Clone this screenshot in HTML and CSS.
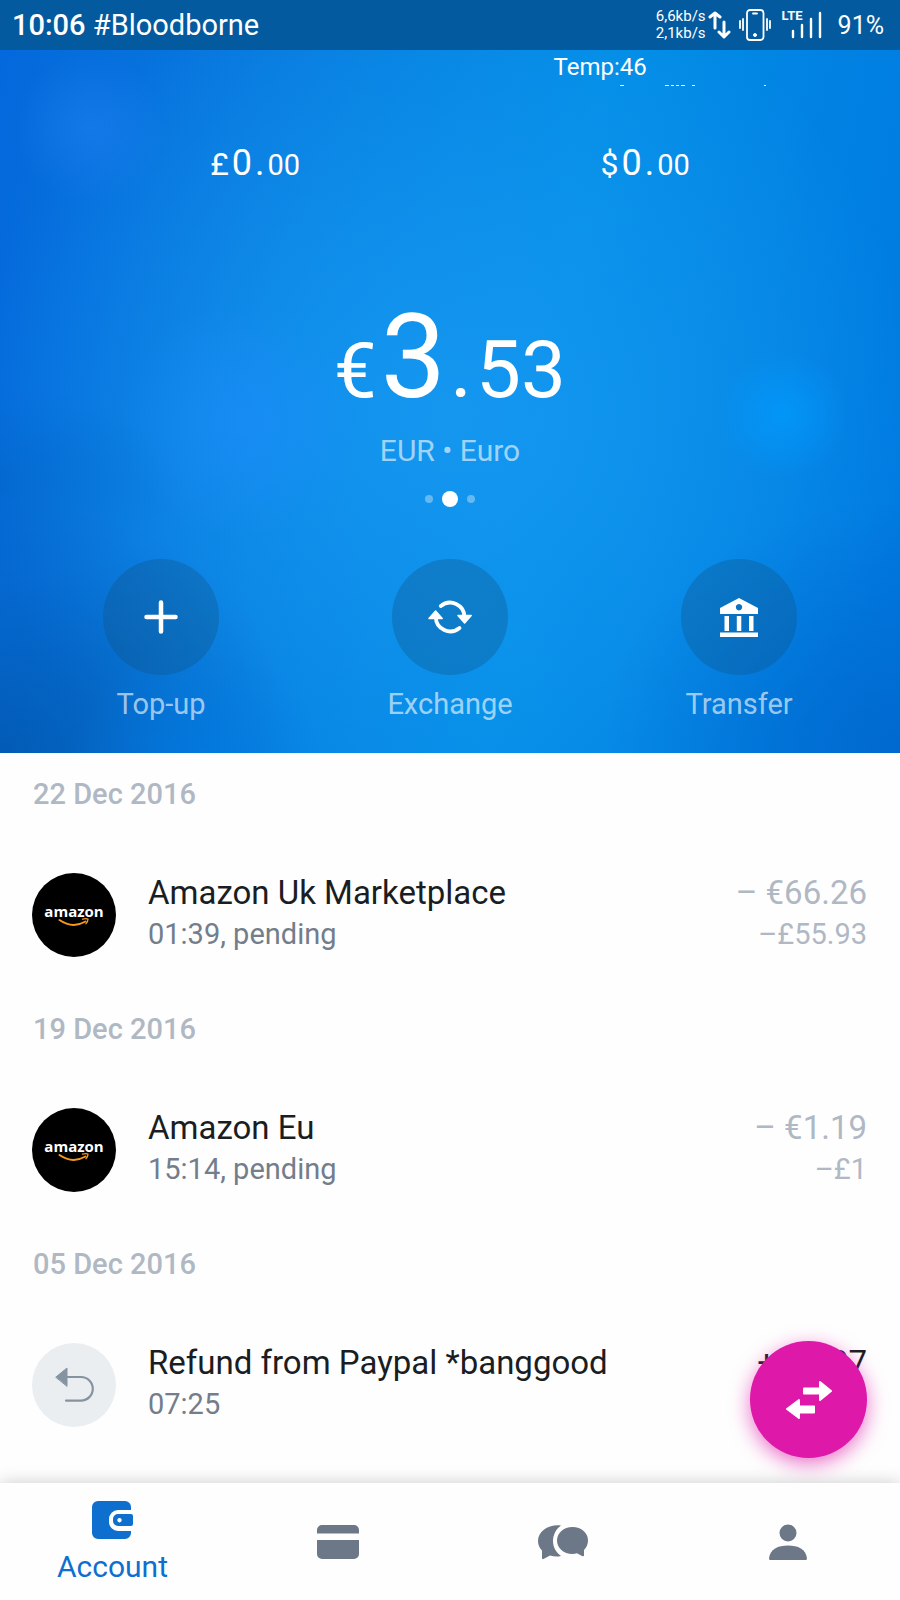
FILE: index.html
```
<!DOCTYPE html>
<html lang="en">
<head>
<meta charset="utf-8">
<meta name="viewport" content="width=device-width, initial-scale=1">
<title>Account</title>
<link rel="stylesheet" href="styles.css">
</head>
<body>
<div class="app">
  <header class="hero">
    <div class="status">
      <div class="status-left"><b class="clock">10:06</b> #Bloodborne</div>
      <div class="status-right">
        <div class="speeds"><span>6,6kb/s</span><span>2,1kb/s</span></div>
        <svg class="arrows" width="24" height="28" viewBox="0 0 24 28" fill="none" stroke="#fff" stroke-width="3" stroke-linecap="round" stroke-linejoin="round"><path d="M7 17V2M2 6l5-4 5 4M16 11v14M11 21l5 5 5-5"/></svg>
        <svg class="phone" width="32" height="32" viewBox="0 0 32 32" fill="none" stroke="#fff" stroke-width="1.8" stroke-linecap="round"><rect x="8" y="1" width="16.500" height="30" rx="3"/><path d="M14 4.500h4M1 12v7M4 10v11M28 10v11M31 12v7"/><circle cx="16" cy="26" r="1.500" fill="#fff" stroke-width="1"/></svg>
        <div class="signal">
          <span class="lte">LTE</span>
          <svg width="32" height="28" viewBox="0 0 32 28" stroke="#fff" stroke-width="2.400" stroke-linecap="round"><path d="M3 20v6M12 14v12M21 8v18M30 2v24"/></svg>
        </div>
        <span class="battery">91%</span>
      </div>
    </div>
    <div class="temp">Temp:46
      <svg class="specks" width="150" height="2" viewBox="0 0 150 2" fill="#fff"><path d="M2 0h4v1H2zM47 0h4v1h-4zM53 0h3v1h-3zM58 0h3v1h-3zM63 0h4v1h-4zM74 0h3v1h-3zM146 0h2v1h-2z"/></svg>
    </div>
    <div class="others">
      <div class="small-sum"><span class="sign">£</span><span class="whole">0</span><span class="whole">.</span><span class="cents">00</span></div>
      <div class="small-sum"><span class="sign">$</span><span class="whole">0</span><span class="whole">.</span><span class="cents">00</span></div>
    </div>
    <div class="balance"><span class="sign">€</span><span class="whole">3</span><span class="point">.</span><span class="cents">53</span></div>
    <div class="currency">EUR • Euro</div>
    <div class="dots"><i></i><i class="on"></i><i></i></div>
    <div class="actions">
      <button class="action" type="button">
        <span class="disc"><svg width="44" height="44" viewBox="0 0 44 44" stroke="#fff" stroke-width="4.500" stroke-linecap="round"><path d="M22 7.500v29M7.500 22h29"/></svg></span>
        Top-up
      </button>
      <button class="action" type="button">
        <span class="disc"><svg width="44" height="44" viewBox="0 0 44 44" fill="none" stroke="#fff" stroke-width="3.800" stroke-linecap="round" stroke-linejoin="round"><path d="M12.800 11A14.500 14.500 0 0 1 36.500 22M31.500 33A14.500 14.500 0 0 1 7.800 22"/><path fill="#fff" stroke-width="1.500" d="M30 20.500h13.200L36.600 28zM1 23.500h13.200L7.600 16z"/></svg></span>
        Exchange
      </button>
      <button class="action" type="button">
        <span class="disc"><svg width="40" height="40" viewBox="0 0 40 40" fill="#fff"><path fill-rule="evenodd" d="M20 1 39 11v6H1v-6zM20 7a3.200 3.200 0 1 0 .01 0z"/><path d="M5.500 19h4.500v15H5.500zM17.800 19h4.500v15h-4.500zM30 19h4.500v15H30zM1 35.500h38V40H1z"/></svg></span>
        Transfer
      </button>
    </div>
  </header>

  <main class="list">
    <section class="day">
      <h2>22 Dec 2016</h2>
      <article class="entry">
        <div class="avatar amazon">amazon<svg width="32" height="9" viewBox="0 0 32 9" fill="none" stroke="#f79a1c" stroke-linecap="round"><path stroke-width="2" d="M1.500 2q13 9 26 1.500"/><path stroke-width="1.300" d="M24.500 1.200q4-1 5.500 0 0 2-2 4.500"/></svg></div>
        <div class="what"><h3>Amazon Uk Marketplace</h3><p>01:39, pending</p></div>
        <div class="sum"><span>– €66.26</span><small>–£55.93</small></div>
      </article>
    </section>
    <section class="day">
      <h2>19 Dec 2016</h2>
      <article class="entry">
        <div class="avatar amazon">amazon<svg width="32" height="9" viewBox="0 0 32 9" fill="none" stroke="#f79a1c" stroke-linecap="round"><path stroke-width="2" d="M1.500 2q13 9 26 1.500"/><path stroke-width="1.300" d="M24.500 1.200q4-1 5.500 0 0 2-2 4.500"/></svg></div>
        <div class="what"><h3>Amazon Eu</h3><p>15:14, pending</p></div>
        <div class="sum"><span>– €1.19</span><small>–£1</small></div>
      </article>
    </section>
    <section class="day">
      <h2>05 Dec 2016</h2>
      <article class="entry">
        <div class="avatar refund"><svg width="40" height="36" viewBox="0 0 40 36" fill="none" stroke="#8593a0" stroke-width="2.200" stroke-linecap="round"><path d="M12 10h15a11.800 11.800 0 0 1 0 23.600H12"/><path fill="#8593a0" stroke-width="1" stroke-linejoin="round" d="M2 10 13 1v18z"/></svg></div>
        <div class="what"><h3>Refund from Paypal *banggood</h3><p>07:25</p></div>
        <div class="sum credit"><span>+ €3.37</span></div>
      </article>
    </section>
  </main>

  <footer class="dock">
    <button class="fab" type="button" aria-label="Move money"><svg width="46" height="38" viewBox="0 0 46 38" fill="#fff" stroke="#fff" stroke-linejoin="round" stroke-width="2"><path d="M18 7.500h16V1l11 9-11 9v-6.500H18zM28 31.500H13V37L1 28l12-9v6.500h15z"/></svg></button>
    <nav class="tabs">
      <a class="tab active" href="#account"><svg width="42" height="40" viewBox="0 0 42 40" fill="#0f6fcf"><path d="M6 1h27a6 6 0 0 1 6 6v3H26a9 9 0 0 0-9 9v3a9 9 0 0 0 9 9h13v2a6 6 0 0 1-6 6H6a6 6 0 0 1-6-6V7a6 6 0 0 1 6-6z"/><path fill-rule="evenodd" d="M26 14h13a2 2 0 0 1 2 2v8a2 2 0 0 1-2 2H26a5 5 0 0 1-5-5v-2a5 5 0 0 1 5-5zM27.500 18a2.200 2.200 0 1 0 .01 0z"/></svg>Account</a>
      <a class="tab" href="#cards" aria-label="Cards"><svg width="44" height="36" viewBox="0 0 44 36" fill="#6c7787"><path d="M1 9.500V6a5 5 0 0 1 5-5h32a5 5 0 0 1 5 5v3.500zM1 16h42v14a5 5 0 0 1-5 5H6a5 5 0 0 1-5-5z"/></svg></a>
      <a class="tab" href="#chat" aria-label="Chat"><svg width="52" height="36" viewBox="0 0 52 36" fill="#6c7787"><path d="M24 1.500C12 0 1 7 1 17c0 4 1.500 7 4 9.500V34q0 1.500 1.500 1L13 31.500q6 1.800 11 .500c-5-3.500-8-9-8-15s3-12 8-15.500z"/><path d="M35.500 3C26.500 3 20 9 20 16.500S26.500 30 35.500 30q2.500 0 4.500-.8l5.500 3q1.500.6 1.500-1V26c2.500-2.500 4-6 4-9.500C51 9 44.500 3 35.500 3z"/></svg></a>
      <a class="tab" href="#profile" aria-label="Profile"><svg width="38" height="36" viewBox="0 0 38 36" fill="#6c7787"><circle cx="19" cy="9" r="8.500"/><path d="M0 34.500C1 25 9 21.500 19 21.500S37 25 38 34.500q0 1.500-1.500 1.500h-35Q0 36 0 34.500z"/></svg></a>
    </nav>
  </footer>
</div>
</body>
</html>
```
FILE: styles.css
```
* { box-sizing: border-box; }

body {
  margin: 0;
  background: #fefefe;
  font-family: Roboto, "Liberation Sans", sans-serif;
  color: #1a1e22;
}

h2, h3, p { margin: 0; font-weight: 400; }

button { border: 0; padding: 0; background: none; font: inherit; color: inherit; }

svg { display: block; }

.app { display: flex; flex-direction: column; min-height: 100vh; }

.hero {
  color: #fff;
  padding-bottom: 32px;
  background:
    radial-gradient(circle at 10% 17%, rgba(26, 124, 236, .7), transparent 75px),
    radial-gradient(circle at 27% 56%, rgba(32, 142, 255, .5), transparent 120px),
    radial-gradient(circle at 87% 55%, rgba(0, 156, 255, .7), transparent 65px),
    radial-gradient(ellipse at 22% 104%, rgba(0, 122, 228, .7), transparent 130px),
    radial-gradient(ellipse at 0% 100%, rgba(0, 82, 165, .7), transparent 300px),
    radial-gradient(ellipse at 0% 64%, rgba(0, 98, 190, .4), transparent 180px),
    radial-gradient(ellipse at 100% 100%, rgba(0, 98, 200, .7), transparent 300px),
    radial-gradient(ellipse 52% 62% at 50% 55%, #1597f0, rgba(21, 151, 240, 0)),
    linear-gradient(100deg, #0468dc 0%, #0878de 25%, #028ee6 60%, #0078e0 100%);
}

.status {
  display: flex;
  align-items: center;
  justify-content: space-between;
  height: 50px;
  padding: 0 16px 0 12px;
  background: #045a9e;
  font-size: 29px;
}

.clock { font-weight: 500; }

.status-right { display: flex; align-items: center; }

.speeds { display: flex; flex-direction: column; font-size: 15px; line-height: 17px; }

.arrows { margin: 0 7px 0 2px; }
.phone { margin-right: 11px; }

.signal { position: relative; padding-left: 8px; margin-right: 16px; }
.lte { position: absolute; left: 0; top: 0; font-size: 13px; line-height: 10px; font-weight: 700; }

.battery { font-size: 25px; }

.temp { position: relative; width: max-content; margin-left: 61.5%; font-size: 24px; line-height: 34px; }
.specks { position: absolute; left: 64px; top: 35px; }

.others {
  display: flex;
  justify-content: space-around;
  margin-top: 49px;
  padding: 0 60px;
}

.small-sum { display: flex; align-items: baseline; justify-content: center; gap: 3px; font-size: 32px; line-height: 60px; }
.small-sum .whole { font-size: 36px; }
.small-sum .cents { font-size: 29px; }

.balance {
  display: flex;
  align-items: baseline;
  justify-content: center;
  gap: 4px;
  margin-top: 102px;
  font-size: 76px;
  line-height: 120px;
}
.balance .whole { font-size: 116px; }
.balance .point { font-size: 84px; }
.balance .cents { font-size: 80px; }

.currency { margin-top: 2px; text-align: center; font-size: 30px; line-height: 36px; color: rgba(255, 255, 255, .6); }

.dots { display: flex; align-items: center; justify-content: center; gap: 8px; height: 16px; margin-top: 22px; }
.dots i { width: 8px; height: 8px; border-radius: 50%; background: rgba(255, 255, 255, .35); }
.dots .on { width: 16px; height: 16px; margin: 0 1px; background: #fff; }

.actions { display: flex; justify-content: space-between; margin-top: 52px; padding: 0 81px; }
.action {
  display: flex;
  flex-direction: column;
  align-items: center;
  gap: 12px;
  width: 160px;
  font-size: 29px;
  line-height: 34px;
  color: rgba(255, 255, 255, .62);
}
.disc {
  display: flex;
  align-items: center;
  justify-content: center;
  width: 116px;
  height: 116px;
  border-radius: 50%;
  background: rgba(14, 80, 130, .32);
}

.list { flex: 1; }
.day { padding: 24px 33px 0 32px; height: 235px; }
.day h2 { padding-left: 1px; font-size: 29px; line-height: 34px; font-weight: 500; color: #b0b8c4; }

.entry { display: flex; align-items: flex-start; margin-top: 62px; }
.avatar {
  display: flex;
  flex-direction: column;
  align-items: center;
  justify-content: center;
  flex: none;
  width: 84px;
  height: 84px;
  margin-right: 32px;
  border-radius: 50%;
}
.amazon { background: #000; color: #fff; font: 700 15px/14px "Open Sans", sans-serif; }
.refund { background: #eaeef1; }

.what { flex: 1; }
.what h3, .sum span { font-size: 33px; line-height: 40px; }
.what p, .sum small { font-size: 29px; line-height: 43px; }
.what p { color: #737d8b; }
.sum { display: flex; flex-direction: column; align-items: flex-end; color: #b0b8c4; }
.sum.credit { color: #1a1e22; }

.dock { position: sticky; bottom: 0; z-index: 1; }
.fab {
  position: absolute;
  z-index: -1;
  right: 33px;
  bottom: 142px;
  display: flex;
  align-items: center;
  justify-content: center;
  width: 117px;
  height: 117px;
  border-radius: 50%;
  background: #de18a8;
  box-shadow: 0 6px 20px rgba(222, 24, 168, .6);
}

.tabs {
  display: grid;
  grid-template-columns: repeat(4, 1fr);
  height: 117px;
  background: #fefefe;
  box-shadow: 0 0 16px rgba(0, 0, 0, .2);
}
.tab {
  display: flex;
  flex-direction: column;
  align-items: center;
  justify-content: center;
  gap: 10px;
  font-size: 30px;
  line-height: 34px;
  color: #0f6fcf;
  text-decoration: none;
}
```
